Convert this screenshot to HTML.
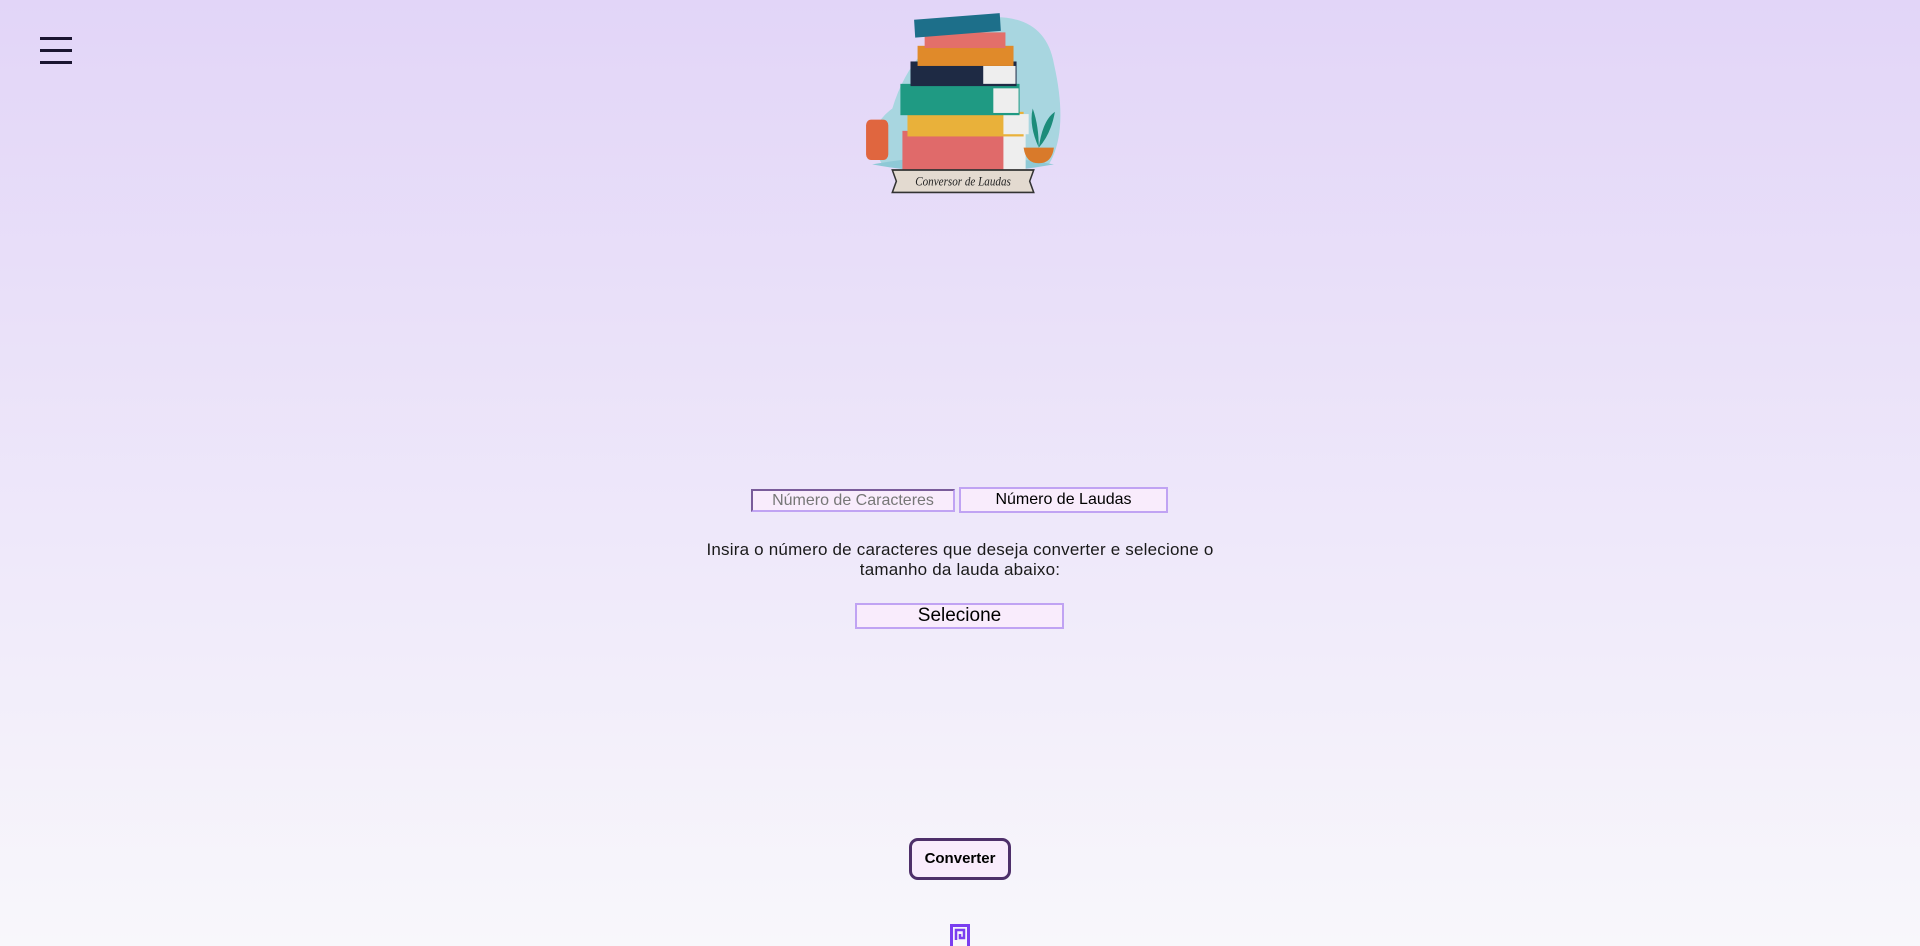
<!DOCTYPE html>
<html><head><meta charset="utf-8"><style>
html,body{margin:0;width:1920px;height:946px;overflow:hidden}
body{background:linear-gradient(#e2d5f8,#f8f7fb);font-family:"Liberation Sans",sans-serif;position:relative}
.ham{position:absolute;left:40px;top:37px;width:32px}
.ham div{height:3px;background:#1a1530;margin-bottom:9px}
.box{position:absolute;box-sizing:border-box;background:#f9ecfc;border:2px solid #c0a3f3;text-align:center;color:#000}
.txt{position:absolute;left:680px;width:560px;top:540px;text-align:center;font-size:17px;line-height:20px;color:#1a1a1a;letter-spacing:.2px}
.btn{position:absolute;left:909px;top:838px;width:102px;height:42px;box-sizing:border-box;border:3px solid #4e2f6a;border-radius:9px;background:#f9ecfc;font-weight:bold;font-size:15px;text-align:center;line-height:36px}
</style></head><body>
<div class="ham"><div></div><div></div><div></div></div>
<svg style="position:absolute;left:860px;top:10px" width="202" height="188" viewBox="8 12 200 168" preserveAspectRatio="none">
<path d="M30 150 Q10 120 40 100 Q60 40 120 20 Q190 10 200 60 Q215 120 195 150 Z" fill="#a8d6e0"/>
<path d="M20 150 Q110 135 200 150 Q110 165 20 150Z" fill="#8ec9d6"/>
<rect x="50" y="120" width="120" height="42" fill="#e06a6a"/><rect x="150" y="122" width="22" height="38" fill="#eee"/>
<rect x="55" y="103" width="115" height="22" fill="#e9b13a"/><rect x="150" y="105" width="25" height="18" fill="#eee"/>
<rect x="48" y="78" width="118" height="28" fill="#1f9a83"/><rect x="140" y="82" width="25" height="22" fill="#eee"/>
<rect x="58" y="58" width="105" height="22" fill="#1e2a44"/><rect x="130" y="62" width="32" height="16" fill="#eee"/>
<rect x="65" y="44" width="95" height="18" fill="#e08a2a"/>
<rect x="72" y="32" width="80" height="14" fill="#e36f6a"/>
<rect x="62" y="18" width="85" height="16" fill="#1d6f8a" transform="rotate(-4 100 26)"/>
<rect x="14" y="110" width="22" height="36" rx="5" fill="#e0663f"/>
<path d="M170 135 h30 q-2 14 -15 14 q-13 0 -15 -14z" fill="#d97a2a"/>
<path d="M185 135 q-10 -20 -6 -35 q6 15 6 35 q4 -25 16 -32 q-4 20 -16 32z" fill="#1c8c7a"/>
<path d="M40 155 h140 l-4 10 4 10 h-140 l4 -10z" fill="#e3dad0" stroke="#333" stroke-width="1.5"/>
<text x="110" y="169" font-size="11" text-anchor="middle" font-family="Liberation Serif,serif" font-style="italic" fill="#222">Conversor de Laudas</text>
</svg>
<div class="box" style="left:751px;top:489px;width:204px;height:23px;border-color:#c0a3f3 #c0a3f3 #c0a3f3 #7a5c9a;border-top-color:#7a5c9a;font-size:16px;line-height:19px;color:#777">Número de Caracteres</div>
<div class="box" style="left:959px;top:487px;width:209px;height:26px;font-size:16px;line-height:22px">Número de Laudas</div>
<div class="txt">Insira o número de caracteres que deseja converter e selecione o<br>tamanho da lauda abaixo:</div>
<div class="box" style="left:855px;top:603px;width:209px;height:26px;font-size:19px;line-height:22px">Selecione</div>
<div class="btn">Converter</div>
<svg style="position:absolute;left:950px;top:924px" width="20" height="22" viewBox="0 0 20 22"><rect x="1.5" y="1.5" width="17" height="22" fill="none" stroke="#7b3ff0" stroke-width="3"/><path d="M6 16 V6 H14 V14 H10 V10" fill="none" stroke="#7b3ff0" stroke-width="2.5"/></svg>
</body></html>
